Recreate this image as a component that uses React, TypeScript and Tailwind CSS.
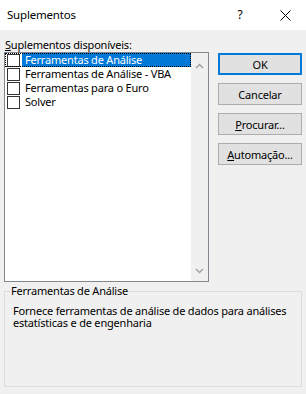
const font = "font-['Segoe_UI','Noto_Sans',sans-serif] tracking-[-0.2px]";

const items = [
  'Ferramentas de Análise',
  'Ferramentas de Análise - VBA',
  'Ferramentas para o Euro',
  'Solver',
];

const Chevron = ({ down }: { down?: boolean }) => (
  <svg width="9" height="6" viewBox="0 0 9 6" className="block">
    <path
      d={down ? 'M1 1 L4.5 4.5 L8 1' : 'M1 5 L4.5 1.5 L8 5'}
      fill="none"
      stroke="#a3a3a3"
      strokeWidth="1.5"
    />
  </svg>
);

const Button = ({ children, primary }: { children: React.ReactNode; primary?: boolean }) => (
  <button
    className={
      primary
        ? 'h-[22px] w-full border-2 border-[#0078d7] bg-[#e1e1e1] text-[11px] text-black leading-none'
        : 'h-[22px] w-full border border-[#adadad] bg-[#e1e1e1] text-[11px] text-black leading-none'
    }
  >
    {children}
  </button>
);

export default function App() {
  return (
    <div className={`w-[306px] h-[394px] bg-[#f0f0f0] flex flex-col ${font}`}>
      {/* barra de título */}
      <div className="h-[30px] bg-white flex items-center pl-[7px] text-[11.5px] text-black">
        <span className="flex-1">Suplementos</span>
        <span className="w-[12px] text-center mr-[34px] text-[12px]">?</span>
        <svg width="11" height="11" viewBox="0 0 11 11" className="mr-[15px]">
          <path d="M0.5 0.5 L10.5 10.5 M10.5 0.5 L0.5 10.5" stroke="#000" strokeWidth="1" />
        </svg>
      </div>

      <div className="flex flex-col px-[4px]">
        <div className="mt-[7px] h-[15px] pl-[1px] text-[11px] leading-[15px] text-black">
          <span className="underline">S</span>uplementos disponíveis:
        </div>

        <div className="flex">
          {/* lista de suplementos */}
          <div className="w-[205px] h-[230px] border border-[#828790] bg-white flex">
            <ul className="flex-1 flex flex-col">
              {items.map((item, i) => (
                <li
                  key={item}
                  className={
                    i === 0
                      ? 'h-[14px] flex items-center outline-1 outline-dotted outline-black -outline-offset-1'
                      : 'h-[14px] flex items-center'
                  }
                >
                  <span className="ml-[2px] w-[13px] h-[13px] border border-[#333] bg-white shrink-0"></span>
                  <span
                    className={
                      i === 0
                        ? 'ml-[2px] flex-1 h-[14px] bg-[#0078d7] text-white pl-[3px] text-[11px] leading-[14px]'
                        : 'ml-[2px] flex-1 h-[14px] text-black pl-[3px] text-[11px] leading-[14px]'
                    }
                  >
                    {item}
                  </span>
                </li>
              ))}
            </ul>
            <div className="w-[17px] bg-[#f0f0f0] flex flex-col items-center justify-between pt-[10px] pb-[7px]">
              <Chevron />
              <Chevron down />
            </div>
          </div>

          {/* botões */}
          <div className="ml-[9px] mt-[1px] w-[84px] flex flex-col gap-[8px]">
            <Button primary>OK</Button>
            <Button>Cancelar</Button>
            <Button>
              <span className="underline">P</span>rocurar...
            </Button>
            <Button>
              <span className="underline">A</span>utomação...
            </Button>
          </div>
        </div>

        {/* descrição */}
        <fieldset className="mt-[2px] h-[103px] border border-[#dcdcdc] pl-[8px] pr-[2px]">
          <legend className="-ml-[3px] px-[1px] text-[11px] leading-[14px] text-black">
            Ferramentas de Análise
          </legend>
          <p className="mt-[7px] text-[11px] leading-[12px] text-black">
            Fornece ferramentas de análise de dados para análises estatísticas e de engenharia
          </p>
        </fieldset>
      </div>
    </div>
  );
}
